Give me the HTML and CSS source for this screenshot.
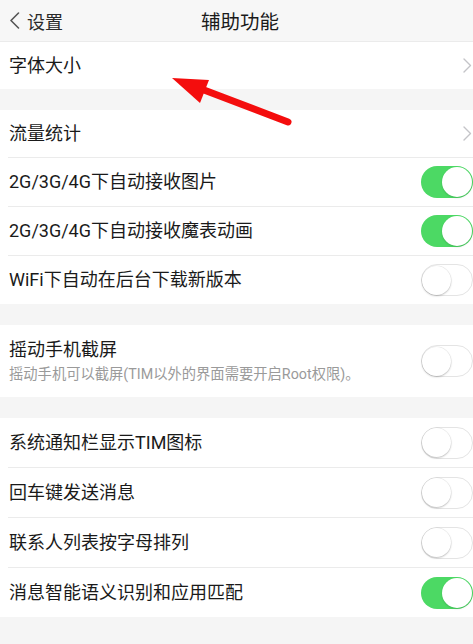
FILE: index.html
```html
<!DOCTYPE html>
<html lang="zh-CN">
<head>
<meta charset="utf-8">
<title>辅助功能</title>
<link rel="stylesheet" href="styles.css">
</head>
<body>
<div class="page">
  <header class="topbar">
    <div class="back">
      <svg class="back-icon" width="11" height="17" viewBox="0 0 11 17"><path d="M9.5 1 L2 8.5 L9.5 16" fill="none" stroke="#555" stroke-width="1.6" stroke-linecap="round" stroke-linejoin="round"/></svg>
      <span>设置</span>
    </div>
    <div class="title">辅助功能</div>
    <div class="spacer"></div>
  </header>

  <section class="group">
    <div class="row first-row">
      <span class="label">字体大小</span>
      <svg class="chev" width="9" height="15" viewBox="0 0 9 15"><path d="M1 1 L7.5 7.5 L1 14" fill="none" stroke="#c4c4c8" stroke-width="1.4" stroke-linecap="round" stroke-linejoin="round"/></svg>
    </div>
  </section>

  <section class="group">
    <div class="row first-row">
      <span class="label">流量统计</span>
      <svg class="chev" width="9" height="15" viewBox="0 0 9 15"><path d="M1 1 L7.5 7.5 L1 14" fill="none" stroke="#c4c4c8" stroke-width="1.4" stroke-linecap="round" stroke-linejoin="round"/></svg>
    </div>
    <div class="row sep">
      <span class="label">2G/3G/4G下自动接收图片</span>
      <span class="switch on"><span class="knob"></span></span>
    </div>
    <div class="row sep">
      <span class="label">2G/3G/4G下自动接收魔表动画</span>
      <span class="switch on"><span class="knob"></span></span>
    </div>
    <div class="row sep">
      <span class="label">WiFi下自动在后台下载新版本</span>
      <span class="switch off"><span class="knob"></span></span>
    </div>
  </section>

  <section class="group">
    <div class="row tall">
      <div class="texts">
        <span class="label">摇动手机截屏</span>
        <span class="sub">摇动手机可以截屏(TIM以外的界面需要开启Root权限)。</span>
      </div>
      <span class="switch off"><span class="knob"></span></span>
    </div>
  </section>

  <section class="group roomy">
    <div class="row">
      <span class="label">系统通知栏显示TIM图标</span>
      <span class="switch off"><span class="knob"></span></span>
    </div>
    <div class="row sep">
      <span class="label">回车键发送消息</span>
      <span class="switch off"><span class="knob"></span></span>
    </div>
    <div class="row sep">
      <span class="label">联系人列表按字母排列</span>
      <span class="switch off"><span class="knob"></span></span>
    </div>
    <div class="row sep">
      <span class="label">消息智能语义识别和应用匹配</span>
      <span class="switch on"><span class="knob"></span></span>
    </div>
  </section>

  <svg class="annot" width="473" height="140" viewBox="0 0 473 140">
    <line x1="204" y1="90" x2="288" y2="122" stroke="#f40d0d" stroke-width="7" stroke-linecap="round"/>
    <polygon points="172,78 209,80 200,103" fill="#f40d0d"/>
  </svg>
</div>
</body>
</html>
```

FILE: styles.css
```css
html, body {
  margin: 0;
  padding: 0;
}
body {
  background: #f5f5f5;
  font-family: "Roboto", "Noto Sans CJK SC", sans-serif;
  color: #1a1a1a;
}
.page {
  position: relative;
  width: 473px;
  height: 644px;
  overflow: hidden;
  background: #f5f5f5;
}
.topbar {
  height: 41px;
  background: #f7f7f7;
  border-bottom: 1px solid #ebebeb;
  display: grid;
  grid-template-columns: 1fr auto 1fr;
  align-items: center;
}
.back {
  display: flex;
  align-items: center;
  gap: 7px;
  padding-left: 9px;
  font-size: 18px;
  color: #2a2a2a;
}
.back-icon {
  display: block;
}
.title {
  font-size: 19.5px;
  color: #1a1a1a;
  padding-left: 7px;
}
.group {
  background: #fff;
  margin-bottom: 21px;
}
.row {
  height: 48px;
  display: flex;
  align-items: center;
  justify-content: space-between;
  padding-left: 9px;
  position: relative;
}
.row.first-row {
  height: 47px;
}
.group.roomy .row {
  height: 49px;
}
.row.sep {
  border-top: 1px solid #ebebeb;
  margin-left: 8px;
  padding-left: 1px;
}
.row.tall {
  height: 72px;
}
.label {
  font-size: 18px;
  line-height: 22px;
  white-space: nowrap;
}
.texts {
  display: flex;
  flex-direction: column;
  gap: 5px;
}
.sub {
  font-size: 14.3px;
  line-height: 17px;
  color: #9a9a9a;
  white-space: nowrap;
}
.chev {
  display: block;
  margin-right: 1px;
}
.switch {
  width: 52px;
  height: 32px;
  box-sizing: border-box;
  border-radius: 16px;
  display: flex;
  align-items: center;
  flex-shrink: 0;
}
.switch.on {
  background: #4cd964;
  justify-content: flex-end;
  padding: 0 1px;
}
.switch.off {
  background: #fff;
  border: 1.5px solid #e4e4e4;
  justify-content: flex-start;
  padding: 0;
}
.knob {
  width: 30px;
  height: 30px;
  border-radius: 50%;
  background: #fff;
  box-sizing: border-box;
}
.switch.on .knob {
  box-shadow: 0 1px 2px rgba(0,0,0,0.15);
}
.switch.off .knob {
  width: 29px;
  height: 29px;
  box-shadow: 0 1px 2px rgba(0,0,0,0.22), 0 0 0 0.5px rgba(0,0,0,0.08);
}
.annot {
  position: absolute;
  left: 0;
  top: 0;
  pointer-events: none;
}
```
